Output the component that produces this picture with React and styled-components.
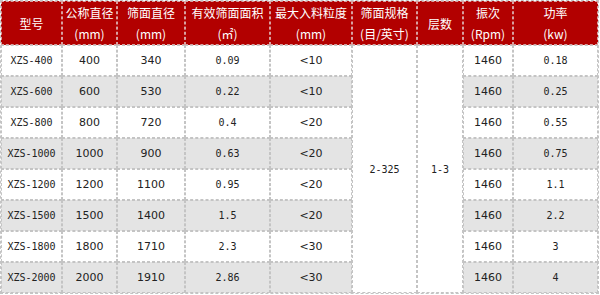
import React from "react";
import styled, { createGlobalStyle } from "styled-components";

const GlobalStyle = createGlobalStyle`
  html, body {
    margin: 0;
    padding: 0;
    background: #fff;
  }
`;

const Table = styled.table`
  width: 597px;
  border-collapse: separate;
  border-spacing: 0;
  border: 1px dashed #c4c4c4;
  table-layout: fixed;
  font-family: "DejaVu Sans", "Noto Sans CJK SC", sans-serif;
  font-size: 11px;
  color: #222;
`;

const HeadCell = styled.th`
  background: #b20000;
  color: #fff;
  font-family: "Noto Sans CJK SC", sans-serif;
  font-weight: normal;
  font-size: 12px;
  line-height: 21px;
  height: 41px;
  padding: 0;
  text-align: center;
  border: 1px dashed #d9a0a0;
`;

const Row = styled.tr`
  background: ${(p) => (p.$shade ? "#e4e4e4" : "#fff")};
`;

const Cell = styled.td`
  height: 29px;
  padding: 0;
  text-align: center;
  border: 1px dashed #c4c4c4;
  font-family: ${(p) => (p.$mono ? '"DejaVu Sans Mono", monospace' : "inherit")};
  font-size: ${(p) => (p.$mono ? "10px" : "11px")};
`;

const MergedCell = styled(Cell)`
  background: #fff;
`;

const widths = [61, 55, 68, 85, 82, 65, 46, 50, 85];

const headers = [
  ["型号"],
  ["公称直径", "(mm)"],
  ["筛面直径", "(mm)"],
  ["有效筛面面积", "(㎡)"],
  ["最大入料粒度", "(mm)"],
  ["筛面规格", "(目/英寸)"],
  ["层数"],
  ["振次", "(Rpm)"],
  ["功率", "(kw)"],
];

const rows = [
  ["XZS-400", "400", "340", "0.09", "<10", "1460", "0.18"],
  ["XZS-600", "600", "530", "0.22", "<10", "1460", "0.25"],
  ["XZS-800", "800", "720", "0.4", "<20", "1460", "0.55"],
  ["XZS-1000", "1000", "900", "0.63", "<20", "1460", "0.75"],
  ["XZS-1200", "1200", "1100", "0.95", "<20", "1460", "1.1"],
  ["XZS-1500", "1500", "1400", "1.5", "<20", "1460", "2.2"],
  ["XZS-1800", "1800", "1710", "2.3", "<30", "1460", "3"],
  ["XZS-2000", "2000", "1910", "2.86", "<30", "1460", "4"],
];

export default function App() {
  return (
    <>
      <GlobalStyle />
      <Table>
        <colgroup>
          {widths.map((w, i) => (
            <col key={i} style={{ width: w }} />
          ))}
        </colgroup>
        <thead>
          <tr>
            {headers.map((h, i) => (
              <HeadCell key={i}>
                {h[0]}
                {h[1] && (
                  <>
                    <br />
                    {h[1]}
                  </>
                )}
              </HeadCell>
            ))}
          </tr>
        </thead>
        <tbody>
          {rows.map((r, i) => (
            <Row key={r[0]} $shade={i % 2 === 1}>
              <Cell $mono>{r[0]}</Cell>
              <Cell>{r[1]}</Cell>
              <Cell>{r[2]}</Cell>
              <Cell $mono>{r[3]}</Cell>
              <Cell>{r[4]}</Cell>
              {i === 0 && (
                <>
                  <MergedCell $mono rowSpan={8}>2-325</MergedCell>
                  <MergedCell $mono rowSpan={8}>1-3</MergedCell>
                </>
              )}
              <Cell>{r[5]}</Cell>
              <Cell $mono>{r[6]}</Cell>
            </Row>
          ))}
        </tbody>
      </Table>
    </>
  );
}
